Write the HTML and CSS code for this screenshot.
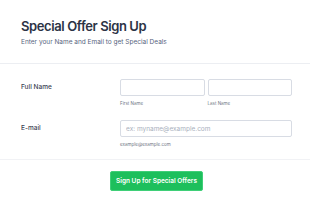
FILE: index.html
```html
<!DOCTYPE html>
<html lang="en">
<head>
  <meta charset="UTF-8" />
  <meta name="viewport" content="width=device-width, initial-scale=1.0" />
  <title>Special Offer Sign Up</title>
  <link rel="stylesheet" href="styles.css">
</head>
<body>
  <div class="form">
    <div class="header">
      <h1 class="title">Special Offer Sign Up</h1>
      <div class="subtitle">Enter your Name and Email to get Special Deals</div>
    </div>

    <div class="fields">
      <div class="row name-row">
        <label class="label">Full Name</label>
        <div class="inputs">
          <div class="half">
            <input type="text" class="input" />
            <span class="sublabel">First Name</span>
          </div>
          <div class="half">
            <input type="text" class="input" />
            <span class="sublabel">Last Name</span>
          </div>
        </div>
      </div>

      <div class="row email-row">
        <label class="label">E-mail</label>
        <div class="inputs">
          <div class="full">
            <input type="email" class="input" placeholder="ex: myname@example.com" />
            <span class="sublabel">example@example.com</span>
          </div>
        </div>
      </div>
    </div>

    <div class="actions">
      <button class="submit">Sign Up for Special Offers</button>
    </div>
  </div>
</body>
</html>
```

FILE: styles.css
```css
body {
  margin: 0;
  background: #ffffff;
  font-family: Inter, "Liberation Sans", sans-serif;
  color: #2c3345;
}
.header {
  padding: 17px 21px 16px;
  border-bottom: 1px solid #eceef2;
}
.title {
  margin: 0;
  font-size: 13px;
  font-weight: 600;
  line-height: 18px;
  letter-spacing: -0.4px;
  color: #2c3345;
}
.subtitle {
  margin-top: 3px;
  font-size: 6.5px;
  line-height: 9px;
  color: #57647e;
}
.fields {
  padding: 15px 18px 11px 21px;
  border-bottom: 1px solid #f1f2f5;
}
.row {
  display: flex;
}
.email-row {
  margin-top: 13px;
}
.label {
  width: 99px;
  flex-shrink: 0;
  font-size: 6.5px;
  font-weight: 500;
  line-height: 17px;
  color: #3a4152;
}
.inputs {
  display: flex;
  gap: 3px;
  flex: 1;
}
.half, .full {
  display: flex;
  flex-direction: column;
  flex: 1;
}
.input {
  box-sizing: border-box;
  height: 17px;
  width: 100%;
  margin: 0;
  padding: 0 5px;
  border: 1px solid #d8dce4;
  border-radius: 2px;
  font-family: inherit;
  font-size: 6.5px;
  color: #2c3345;
  outline: none;
}
.input::placeholder {
  color: #a9b0bd;
}
.sublabel {
  margin-top: 5px;
  font-size: 4.5px;
  line-height: 6px;
  color: #6f7685;
}
.actions {
  display: flex;
  justify-content: center;
  padding: 11px 0 0 3px;
}
.submit {
  height: 20px;
  padding: 0 5.5px;
  border: 1px solid #3fcf78;
  border-radius: 2px;
  background: #1dbf5c;
  color: #ffffff;
  font-family: inherit;
  font-size: 6.5px;
  font-weight: 600;
  cursor: pointer;
}
```
